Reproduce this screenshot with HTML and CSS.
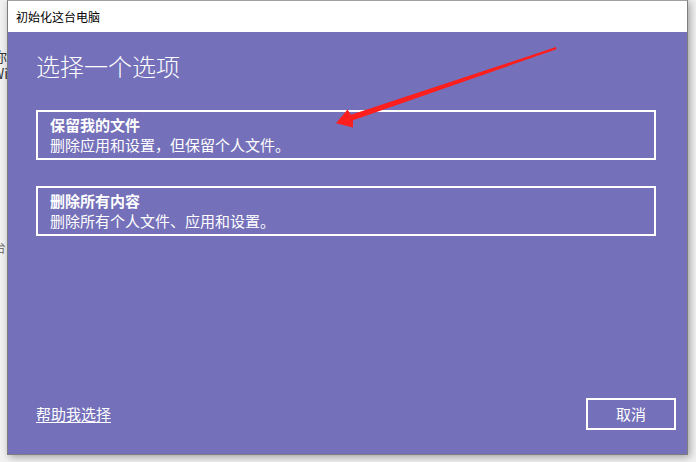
FILE: index.html
```html
<!DOCTYPE html>
<html lang="zh-CN">
<head>
<meta charset="utf-8">
<title>初始化这台电脑</title>
<link rel="stylesheet" href="styles.css">
</head>
<body>
<div class="desktop">
  <div class="behind">
    <div class="behind-line l1">你</div>
    <div class="behind-line l2">Wi</div>
    <div class="behind-line l3">台</div>
  </div>

  <div class="dialog">
    <div class="titlebar">初始化这台电脑</div>
    <div class="content">
      <h1 class="heading">选择一个选项</h1>
      <div class="options">
        <div class="option">
          <div class="option-title">保留我的文件</div>
          <div class="option-desc">删除应用和设置，但保留个人文件。</div>
        </div>
        <div class="option">
          <div class="option-title">删除所有内容</div>
          <div class="option-desc">删除所有个人文件、应用和设置。</div>
        </div>
      </div>
      <div class="footer">
        <a class="help" href="#">帮助我选择</a>
        <button class="cancel" type="button">取消</button>
      </div>
    </div>
  </div>

  <svg class="arrow" width="696" height="462" viewBox="0 0 696 462" aria-hidden="true">
    <polygon points="556,47 351,114.8 347.5,109.5 336,123.3 353,127.5 353,120.2 556.5,49.2" fill="#fd1e1e"/>
  </svg>
</div>
</body>
</html>
```

FILE: styles.css
```css
html, body {
  margin: 0;
  padding: 0;
}

body {
  width: 696px;
  height: 462px;
  overflow: hidden;
  background: #f2f2f2;
  font-family: "Noto Sans CJK SC", "Noto Sans", "Liberation Sans", sans-serif;
}

.desktop {
  position: relative;
  width: 696px;
  height: 462px;
  overflow: hidden;
}

.behind {
  position: absolute;
  left: -7px;
  top: 0;
  width: 60px;
  font-family: "Noto Sans CJK SC", "Liberation Sans", sans-serif;
  color: #333;
}

.behind-line {
  position: absolute;
  left: 0;
  white-space: nowrap;
}

.l1 { top: 49px; font-size: 14px; line-height: 15px; }
.l2 { top: 66px; font-size: 14px; line-height: 15px; left: -1px; }
.l3 { top: 239px; font-size: 13px; line-height: 15px; color: #777; }

.dialog {
  position: absolute;
  left: 7px;
  top: 0;
  width: 679px;
  height: 453px;
  border: 1px solid #7d7d7d;
  border-top-color: #a0a0a0;
  background: #7470b9;
  box-shadow: 2px 2px 8px rgba(0, 0, 0, 0.35);
  display: flex;
  flex-direction: column;
}

.titlebar {
  height: 31px;
  flex: none;
  background: #ffffff;
  color: #000;
  font-size: 12px;
  line-height: 31px;
  padding-left: 8px;
}

.content {
  flex: 1;
  display: flex;
  flex-direction: column;
  padding: 18px 11px 24px 28px;
  color: #ffffff;
}

.heading {
  margin: 0;
  font-size: 24px;
  line-height: 32px;
  font-weight: 300;
}

.options {
  margin-top: 28px;
  width: 620px;
  display: flex;
  flex-direction: column;
  gap: 26px;
}

.option {
  border: 2px solid #ffffff;
  padding: 3px 12px;
  height: 40px;
}

.option-title {
  font-size: 15px;
  line-height: 20px;
  font-weight: 700;
}

.option-desc {
  font-size: 15px;
  line-height: 20px;
}

.footer {
  margin-top: auto;
  display: flex;
  align-items: center;
  justify-content: space-between;
}

.help {
  color: #ffffff;
  font-size: 15px;
  line-height: 20px;
  text-decoration: underline;
  text-underline-offset: 2px;
}

.cancel {
  width: 90px;
  height: 32px;
  border: 2px solid #ffffff;
  background: transparent;
  color: #ffffff;
  font-family: inherit;
  font-size: 15px;
  line-height: 20px;
  padding: 0;
}

.arrow {
  position: absolute;
  left: 0;
  top: 0;
  pointer-events: none;
}
```
